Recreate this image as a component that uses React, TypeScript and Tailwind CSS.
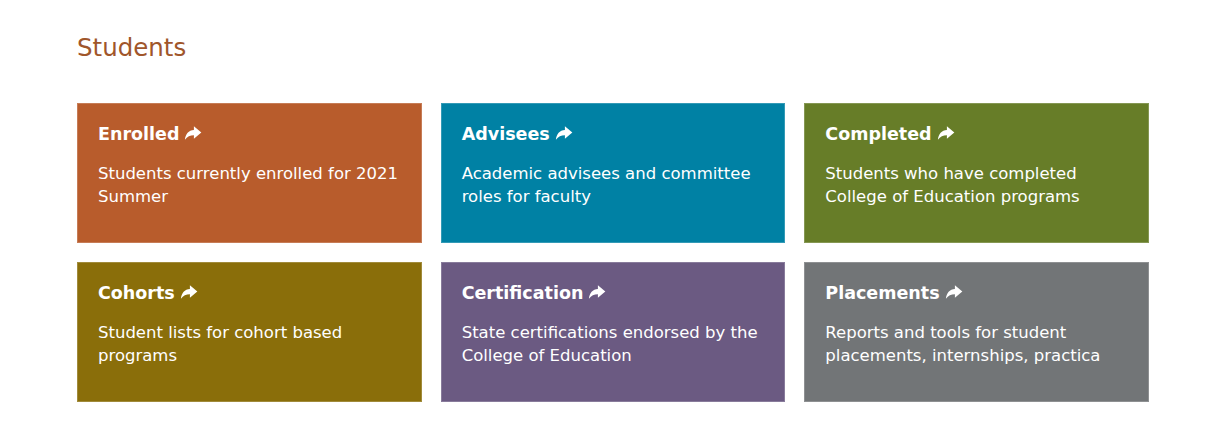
import React from 'react';

type Tile = {
    title: string;
    text: string;
    bg: string;
};

const tiles: Tile[] = [
    { title: 'Enrolled', text: 'Students currently enrolled for 2021 Summer', bg: 'bg-[#b85c2c]' },
    { title: 'Advisees', text: 'Academic advisees and committee roles for faculty', bg: 'bg-[#0081a4]' },
    { title: 'Completed', text: 'Students who have completed College of Education programs', bg: 'bg-[#677d28]' },
    { title: 'Cohorts', text: 'Student lists for cohort based programs', bg: 'bg-[#8a6e0a]' },
    { title: 'Certification', text: 'State certifications endorsed by the College of Education', bg: 'bg-[#6b5a82]' },
    { title: 'Placements', text: 'Reports and tools for student placements, internships, practica', bg: 'bg-[#727577]' },
];

const ShareArrow: React.FC = () => (
    <svg viewBox="0 0 16 16" className="w-[18px] h-[18px] inline-block ml-[5px] -mt-[2px]" fill="currentColor">
        <path d="M8.8 2 L15.4 7.6 L8.8 13.2 V9.9 C5.4 9.9 2.9 10.9 0.8 14 C1.3 8.9 4.2 5.6 8.8 5.3 Z" />
    </svg>
);

export default function App() {
    return (
        <div className="min-h-screen bg-white font-['DejaVu_Sans',Verdana,sans-serif]">
            <div className="pl-[77px] pr-[75px] pt-[32px]">
                <h2 className="text-[24.5px] leading-[32px] text-[#a0562b] font-normal">Students</h2>

                {/* tile grid */}
                <div className="grid grid-cols-3 gap-x-[19px] gap-y-[19px] mt-[39px]">
                    {tiles.map(t => (
                        <a
                            key={t.title}
                            href="#"
                            className={`${t.bg} block h-[140px] pl-[20px] pr-[12px] pt-[18px] text-white border border-white/20`}
                        >
                            <div className="text-[17.5px] leading-[24px] font-bold flex items-center">
                                {t.title}
                                <ShareArrow />
                            </div>
                            <p className="mt-[17px] text-[16.5px] leading-[22.5px]">{t.text}</p>
                        </a>
                    ))}
                </div>
            </div>
        </div>
    );
}
